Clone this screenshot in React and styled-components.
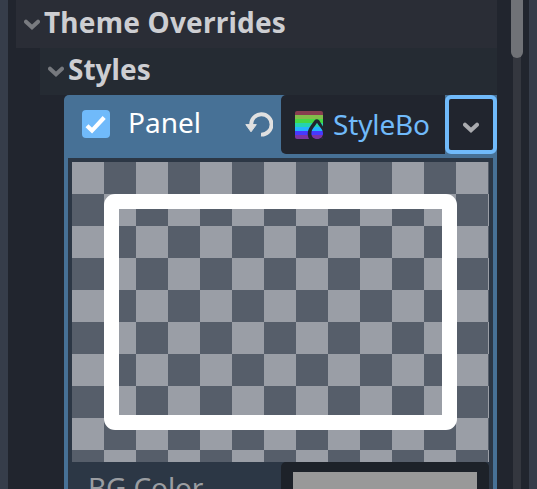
import React from "react";
import styled, { createGlobalStyle } from "styled-components";

const GlobalStyle = createGlobalStyle`
  * { box-sizing: border-box; }
  html, body { margin: 0; overflow: hidden; background: #21252e; }
`;

const Inspector = styled.div`
  display: flex;
  width: 537px;
  height: 489px;
  overflow: hidden;
  background: #21252e;
  font-family: "Noto Sans", sans-serif;
  font-size: 28px;
  color: #cdced2;
`;

const DockEdge = styled.div`
  flex: 0 0 8px;
  background: #363d4a;
`;

const Properties = styled.main`
  width: 481px;
  margin-left: 8px;
  flex: none;
`;

const SectionHeader = styled.header`
  display: flex;
  align-items: center;
  height: ${(p) => p.$height}px;
  margin-left: ${(p) => p.$indent}px;
  padding: 0 0 ${(p) => p.$lift}px 8px;
  gap: 4px;
  background: ${(p) => p.$tone};
  font-weight: 700;
  line-height: 38px;
  white-space: nowrap;
`;

const SectionTitle = styled.span`
  font-size: 28px;
  letter-spacing: ${(p) => p.$spacing || 0}px;
`;

const Arrow = styled.svg`
  display: block;
  flex: none;
  margin-top: ${(p) => p.$drop || 0}px;
`;

const Property = styled.section`
  height: 394px;
  margin-left: 48px;
  padding: 0 4px;
  border-radius: 5px 0 0 0;
  background: #477196;
`;

const PropertyRow = styled.div`
  display: flex;
  height: 63px;
  margin-right: -4px;
`;

const PropertyLabel = styled.div`
  display: flex;
  width: 213px;
  height: 58px;
  padding: 0 8px 0 14px;
  align-items: center;
  color: #fff;
`;

const CheckBox = styled.span`
  display: grid;
  place-items: center;
  width: 28px;
  height: 28px;
  border-radius: 4px;
  background: #70bafa;
`;

const PropertyName = styled.span`
  flex: 1;
  margin-left: 18px;
  line-height: 38px;
  padding-bottom: 4px;
`;

const ResourceButton = styled.div`
  display: flex;
  align-items: center;
  width: 164px;
  height: 59px;
  padding-left: 14px;
  gap: 10px;
  border-radius: 5px 0 0 5px;
  background: #21252e;
  color: #70bafa;
`;

const ResourceName = styled.span`
  line-height: 38px;
  padding-bottom: 1px;
  letter-spacing: -0.15px;
  white-space: nowrap;
`;

const MenuButton = styled.div`
  display: grid;
  place-items: center;
  width: 52px;
  height: 59px;
  border: 4px solid #70bafa;
  border-radius: 6px;
  background: #21252e;
  padding-top: 6px;
`;

const SubInspector = styled.div`
  height: 331px;
  padding: 4px 4px 0;
  background: #2c3745;
`;

const Preview = styled.div`
  width: 417px;
  height: 300px;
  padding: 32px;
  background: repeating-conic-gradient(#565e6a 0 25%, #9a9ea6 0 50%) 0 0 / 64px 64px;
`;

const StyleFrame = styled.div`
  width: 353px;
  height: 236px;
  border: 15px solid #fff;
  border-radius: 11px;
`;

const ColorRow = styled.div`
  display: flex;
  justify-content: space-between;
  height: 60px;
`;

const ColorLabel = styled.span`
  padding: 6px 0 0 16px;
  line-height: 38px;
  letter-spacing: -0.12px;
  color: #9a9da1;
`;

const ColorButton = styled.div`
  width: 208px;
  padding: 10px 12px 0;
  border-radius: 5px;
  background: #1d2229;
`;

const Swatch = styled.div`
  height: 40px;
  background: #999;
`;

const ScrollTrack = styled.div`
  width: 12px;
  margin: 0 6px 0 14px;
  background: linear-gradient(#34373f, #34373f) center / 8px 100% no-repeat;
`;

const ScrollThumb = styled.div`
  height: 58px;
  border-radius: 0 0 6px 6px;
  background: #707277;
`;

function Chevron({ color, drop }) {
  return (
    <Arrow width="16" height="12" viewBox="0 0 16 12" $drop={drop}>
      <path d="M2 2.7 8 8.3 14 2.7" fill="none" stroke={color} strokeWidth="4" strokeLinecap="round" strokeLinejoin="miter" />
    </Arrow>
  );
}

const stripes = ["#873d4f", "#82bb4b", "#45d745", "#24d3b0", "#25b3ff", "#4839ff", "#7d34a4"];

function StyleBoxIcon() {
  return (
    <svg width="28" height="28" viewBox="0 0 28 28">
      <defs>
        <clipPath id="square"><rect width="28" height="28" rx="2" /></clipPath>
        <clipPath id="drop"><path d="M22 11.8C20.2 15.2 16.4 18.2 16.4 22.2C16.4 25.6 18.4 28 22.2 28C26 28 28 25.6 28 22.2C28 18.2 23.8 15.2 22 11.8Z" /></clipPath>
      </defs>
      <g clipPath="url(#square)">
        {stripes.map((c, i) => <rect key={c} y={i * 4} width="28" height="4" fill={c} />)}
        <path d="M14 28C11.8 23.5 12.6 18.5 15.5 15L19.4 9.6Q21.8 7 24.3 9.6L28 15.5V28Z" fill="#21252e" />
      </g>
      <g clipPath="url(#drop)">
        {stripes.map((c, i) => <rect key={c} y={i * 4} width="28" height="4" fill={c} />)}
      </g>
    </svg>
  );
}

export default function App() {
  return (
    <>
      <GlobalStyle />
      <Inspector>
        <DockEdge />
        <Properties>
          <SectionHeader $height={48} $indent={0} $lift={4} $tone="#2a2d36">
            <Chevron color="#797b80" drop={6} />
            <SectionTitle $spacing={0.2}>Theme Overrides</SectionTitle>
          </SectionHeader>
          <SectionHeader $height={47} $indent={24} $lift={5} $tone="#252b33">
            <Chevron color="#76797e" drop={6} />
            <SectionTitle>Styles</SectionTitle>
          </SectionHeader>
          <Property>
            <PropertyRow>
              <PropertyLabel>
                <CheckBox>
                  <svg width="28" height="28" viewBox="0 0 28 28">
                    <path d="M5 15.8 10 20.6 22.2 7.5" fill="none" stroke="#fff" strokeWidth="4.2" />
                  </svg>
                </CheckBox>
                <PropertyName>Panel</PropertyName>
                <svg width="28" height="28" viewBox="0 0 28 28">
                  <path d="M6.2 15A10.2 10.2 0 1 1 16 24.6" fill="none" stroke="#e0e0e0" strokeWidth="3.9" />
                  <path d="M0.8 14.6H11.3L6 21.8Z" fill="#e0e0e0" stroke="#e0e0e0" strokeLinejoin="round" />
                </svg>
              </PropertyLabel>
              <ResourceButton>
                <StyleBoxIcon />
                <ResourceName>StyleBo</ResourceName>
              </ResourceButton>
              <MenuButton><Chevron color="#aaabaf" /></MenuButton>
            </PropertyRow>
            <SubInspector>
              <Preview><StyleFrame /></Preview>
              <ColorRow>
                <ColorLabel>BG Color</ColorLabel>
                <ColorButton><Swatch /></ColorButton>
              </ColorRow>
            </SubInspector>
          </Property>
        </Properties>
        <ScrollTrack><ScrollThumb /></ScrollTrack>
        <DockEdge />
      </Inspector>
    </>
  );
}
